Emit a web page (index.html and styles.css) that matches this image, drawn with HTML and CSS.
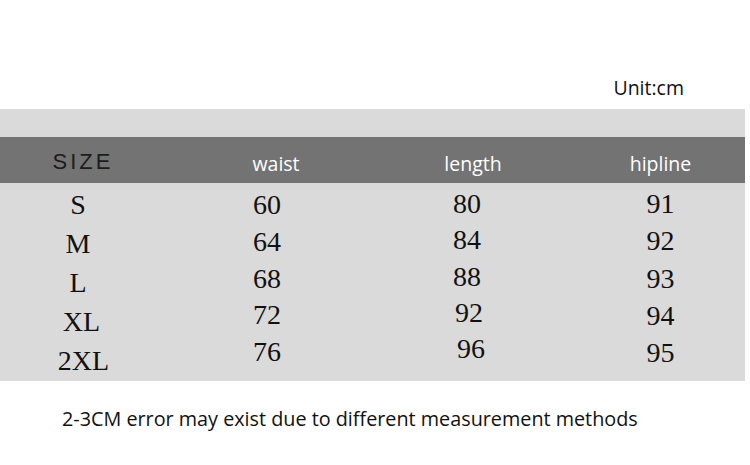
FILE: index.html
```html
<!DOCTYPE html>
<html>
<head>
<meta charset="utf-8">
<link rel="stylesheet" href="styles.css">
</head>
<body>
<div class="page">
  <div class="unit-row"><span class="unit">Unit:cm</span></div>
  <div class="band">
    <div class="head">
      <div class="h h-size">SIZE</div>
      <div class="h h-waist">waist</div>
      <div class="h h-length">length</div>
      <div class="h h-hip">hipline</div>
    </div>
    <div class="body">
      <div class="col col-size">
        <div class="c">S</div>
        <div class="c">M</div>
        <div class="c">L</div>
        <div class="c s4">XL</div>
        <div class="c s5">2XL</div>
      </div>
      <div class="col col-waist">
        <div class="c">60</div>
        <div class="c">64</div>
        <div class="c">68</div>
        <div class="c">72</div>
        <div class="c">76</div>
      </div>
      <div class="col col-length">
        <div class="c">80</div>
        <div class="c">84</div>
        <div class="c">88</div>
        <div class="c s4">92</div>
        <div class="c s5">96</div>
      </div>
      <div class="col col-hip">
        <div class="c">91</div>
        <div class="c">92</div>
        <div class="c">93</div>
        <div class="c">94</div>
        <div class="c">95</div>
      </div>
    </div>
  </div>
  <p class="note">2-3CM error may exist due to different measurement methods</p>
</div>
</body>
</html>
```
FILE: styles.css
```css
html, body {
  margin: 0;
  padding: 0;
  background: #ffffff;
}
.page {
  width: 750px;
  height: 465px;
  overflow: hidden;
  font-family: "Open Sans", "Noto Sans", sans-serif;
  color: #111;
}
.unit-row {
  height: 109px;
  display: flex;
  justify-content: flex-end;
  align-items: flex-end;
  padding-right: 66px;
  box-sizing: border-box;
}
.unit {
  font-size: 19.5px;
  line-height: 24px;
  margin-bottom: 9px;
}
.band {
  width: 745px;
  background: #dadada;
  padding-top: 28px;
}
.head {
  height: 46px;
  background: #737373;
  display: grid;
  grid-template-columns: 156px 222px 178px 189px;
  align-items: center;
}
.h {
  text-align: center;
  color: #fff;
  font-size: 19.5px;
  line-height: 46px;
  padding-top: 4px;
}
.h-size {
  color: #1c1c1c;
  font-family: "Liberation Sans", sans-serif;
  font-size: 22px;
  letter-spacing: 3px;
  padding-top: 0;
  padding-left: 10px;
}
.h-waist { padding-left: 18px; }
.h-length { padding-left: 12px; }
.h-hip { padding-left: 20px; }
.body {
  height: 198px;
  display: grid;
  grid-template-columns: 156px 222px 178px 189px;
  font-family: "Liberation Serif", "DejaVu Serif", serif;
  font-size: 28px;
  color: #111;
}
.col {
  display: flex;
  flex-direction: column;
  text-align: center;
}
.col-size { padding-top: 2px; line-height: 39px; }
.col-waist { padding-top: 4px; line-height: 36.75px; }
.col-length { padding-top: 3px; line-height: 36.25px; }
.col-hip { padding-top: 2px; line-height: 37.25px; padding-left: 20px; }
.col-size .s4 { padding-left: 7px; }
.col-size .s5 { padding-left: 11px; }
.col-length .s4 { padding-left: 4px; }
.col-length .s5 { padding-left: 8px; }
.note {
  margin: 26px 0 0;
  padding-left: 62px;
  font-size: 19.8px;
  line-height: 24px;
  color: #111;
}
```
